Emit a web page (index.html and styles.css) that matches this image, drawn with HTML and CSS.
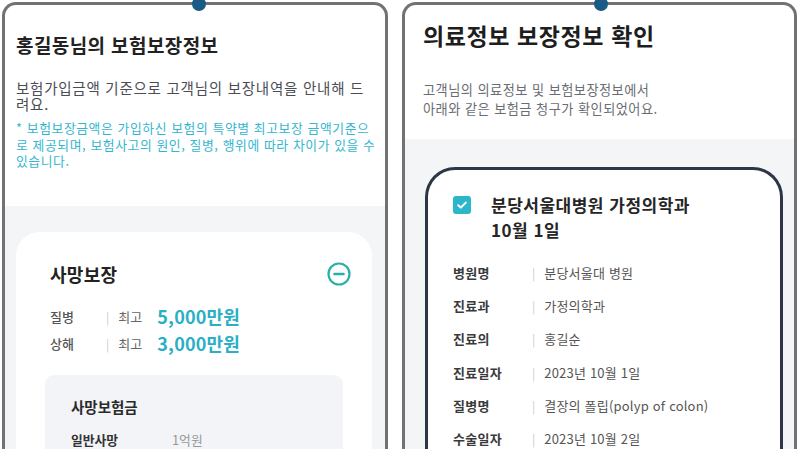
FILE: index.html
```html
<!DOCTYPE html>
<html lang="ko">
<head>
<meta charset="utf-8">
<link rel="stylesheet" href="styles.css">
</head>
<body>
<div class="stage">
  <section class="phone phone-left">
    <span class="dot"></span>
    <div class="head head-left">
      <h1 class="title-left">홍길동님의 보험보장정보</h1>
      <p class="sub-left">보험가입금액 기준으로 고객님의 보장내역을 안내해 드려요.</p>
      <p class="note">* 보험보장금액은 가입하신 보험의 특약별 최고보장 금액기준으로 제공되며, 보험사고의 원인, 질병, 행위에 따라 차이가 있을 수 있습니다.</p>
    </div>
    <div class="body body-left">
      <div class="card-left">
        <div class="card-head">
          <h2 class="card-title">사망보장</h2>
          <svg class="minus" width="26" height="26" viewBox="0 0 26 26"><circle cx="13" cy="13" r="10.5" fill="none" stroke="#2aafa8" stroke-width="2.2"/><line x1="8.5" y1="13" x2="17.5" y2="13" stroke="#2aafa8" stroke-width="2.6" stroke-linecap="round"/></svg>
        </div>
        <div class="cov-row"><span class="cov-label">질병</span><span class="bar">|</span><span class="cov-max">최고</span><span class="cov-amt">5,000만원</span></div>
        <div class="cov-row"><span class="cov-label">상해</span><span class="bar">|</span><span class="cov-max">최고</span><span class="cov-amt">3,000만원</span></div>
        <div class="subbox">
          <h3 class="sub-title">사망보험금</h3>
          <div class="sub-row"><span class="sub-label">일반사망</span><span class="sub-val">1억원</span></div>
        </div>
      </div>
    </div>
  </section>
  <section class="phone phone-right">
    <span class="dot dot-right"></span>
    <div class="head head-right">
      <h1 class="title-right">의료정보 보장정보 확인</h1>
      <p class="sub-right">고객님의 의료정보 및 보험보장정보에서<br>아래와 같은 보험금 청구가 확인되었어요.</p>
    </div>
    <div class="body body-right">
      <div class="card-right">
        <div class="claim-head">
          <svg class="check" width="18" height="18" viewBox="0 0 18 18"><rect x="0" y="0" width="18" height="18" rx="3" fill="#2cb6c9"/><path d="M5.2 9.2 L7.8 11.6 L12.8 6.6" fill="none" stroke="#fff" stroke-width="2" stroke-linecap="round" stroke-linejoin="round"/></svg>
          <h2 class="claim-title">분당서울대병원 가정의학과<br>10월 1일</h2>
        </div>
        <div class="info">
          <div class="info-row"><span class="info-label">병원명</span><span class="bar">|</span><span class="info-val">분당서울대 병원</span></div>
          <div class="info-row"><span class="info-label">진료과</span><span class="bar">|</span><span class="info-val">가정의학과</span></div>
          <div class="info-row"><span class="info-label">진료의</span><span class="bar">|</span><span class="info-val">홍길순</span></div>
          <div class="info-row"><span class="info-label">진료일자</span><span class="bar">|</span><span class="info-val">2023년 10월 1일</span></div>
          <div class="info-row"><span class="info-label">질병명</span><span class="bar">|</span><span class="info-val">결장의 폴립(polyp of colon)</span></div>
          <div class="info-row"><span class="info-label">수술일자</span><span class="bar">|</span><span class="info-val">2023년 10월 2일</span></div>
        </div>
      </div>
    </div>
  </section>
</div>
</body>
</html>
```

FILE: styles.css
```css
* { box-sizing: border-box; margin: 0; padding: 0; }
html, body { background: #ffffff; }
body {
  font-family: "Noto Sans CJK KR", "Noto Sans", sans-serif;
  width: 800px;
  height: 449px;
  overflow: hidden;
}
.stage {
  display: flex;
  gap: 14px;
  padding: 2px 0 0 2px;
}
.phone {
  position: relative;
  height: 470px;
  border: 3px solid #727272;
  border-bottom: none;
  border-radius: 14px 14px 0 0;
  background: #ffffff;
  display: flex;
  flex-direction: column;
}
.phone-left { width: 386px; }
.phone-right { width: 395px; }
.dot {
  position: absolute;
  top: -8px;
  left: 187px;
  width: 14px;
  height: 14px;
  border-radius: 50%;
  background: #1b5a84;
}
.dot-right { left: 189px; }

/* left phone */
.head-left { padding: 27px 4px 36px 11px; border-radius: 11px 11px 0 0; }
.title-left {
  font-size: 19px;
  line-height: 26px;
  font-weight: 700;
  color: #222;
  letter-spacing: 0.4px;
}
.sub-left {
  margin-top: 22px;
  width: 358px;
  font-size: 14.5px;
  line-height: 16px;
  color: #4a4d55;
  letter-spacing: 0.75px;
}
.note {
  margin-top: 8px;
  width: 364px;
  font-size: 12.8px;
  line-height: 16.5px;
  color: #35b6cf;
  letter-spacing: 0.6px;
}
.body { background: #f4f5f7; flex: 1; }
.body-left { padding: 26px 13px 0 11px; }
.card-left {
  background: #fff;
  border-radius: 24px 24px 0 0;
  padding: 30px 20px 20px 34px;
  height: 260px;
}
.card-head { display: flex; justify-content: space-between; align-items: center; height: 24px; }
.card-title { font-size: 18px; line-height: 24px; font-weight: 700; color: #222; letter-spacing: 0.3px; }
.cov-row { display: flex; align-items: center; height: 27px; }
.card-head + .cov-row { margin-top: 17px; }
.cov-label { width: 56px; font-size: 13px; color: #555; font-weight: 500; }
.bar { color: #c8c8c8; font-size: 12px; margin-right: 9px; }
.cov-max { font-size: 13px; color: #666; width: 39px; }
.cov-amt { font-size: 18px; font-weight: 700; color: #2aafc6; letter-spacing: 0.2px; }
.subbox {
  margin: 18px 9px 0 -5px;
  background: #f2f4f7;
  border-radius: 9px;
  padding: 22px 20px 20px 26px;
  height: 120px;
}
.sub-title { font-size: 14.5px; line-height: 20px; font-weight: 700; color: #2a2a2a; }
.sub-row { display: flex; margin-top: 13px; line-height: 20px; }
.sub-label { width: 101px; font-size: 12.8px; font-weight: 700; color: #333; }
.sub-val { font-size: 12.8px; color: #999; }

/* right phone */
.head-right { padding: 14px 12px 21px 18px; border-radius: 11px 11px 0 0; }
.title-right { font-size: 23px; line-height: 32px; font-weight: 700; color: #1e1e1e; letter-spacing: 0.6px; }
.sub-right { margin-top: 29px; font-size: 13.2px; line-height: 19px; color: #6a6d73; letter-spacing: 0.45px; }
.body-right { padding: 28px 11px 0 20px; }
.card-right {
  background: #fff;
  border: 3px solid #2c3646;
  border-bottom: none;
  border-radius: 30px 30px 0 0;
  padding: 22px 20px 0 25px;
  height: 300px;
}
.claim-head { display: flex; align-items: flex-start; gap: 20px; }
.check { margin-top: 4px; flex: none; }
.claim-title { font-size: 17px; line-height: 25px; font-weight: 700; color: #262626; letter-spacing: 0.5px; }
.info { margin-top: 20px; display: flex; flex-direction: column; gap: 13.4px; }
.info-row { display: flex; align-items: center; height: 20px; }
.info-label { width: 79px; font-size: 13px; font-weight: 700; color: #3a3a3a; letter-spacing: 0.3px; }
.info-val { font-size: 13px; color: #555; letter-spacing: 0.2px; }
```
